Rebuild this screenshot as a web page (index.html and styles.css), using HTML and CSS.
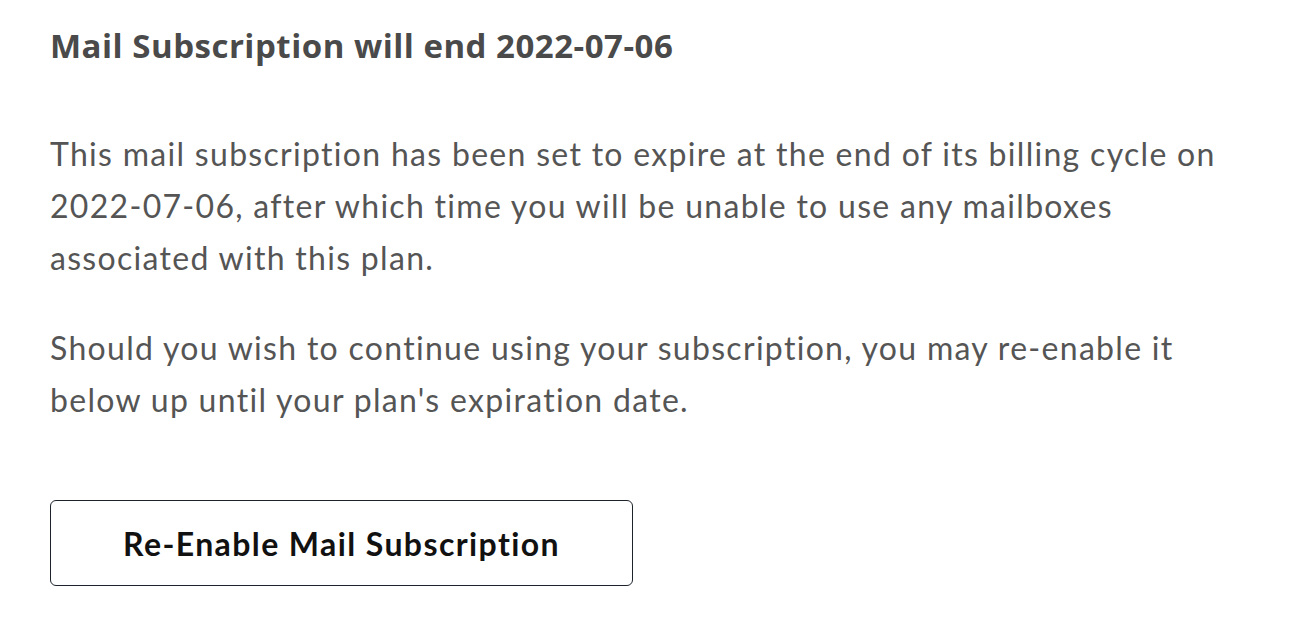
FILE: index.html
```html
<!DOCTYPE html>
<html>
<head>
<meta charset="UTF-8">
<title>Mail Subscription</title>
<link rel="stylesheet" href="styles.css">
</head>
<body>

<div class="panel">
	<h2 class="panel-title">Mail Subscription will end 2022-07-06</h2>

	<p class="panel-text">This mail subscription has been set to expire at the end of its billing cycle on 2022-07-06, after which time you will be unable to use any mailboxes associated with this plan.</p>

	<p class="panel-text">Should you wish to continue using your subscription, you may re-enable it below up until your plan's expiration date.</p>

	<button type="button" class="btn-outline">Re-Enable Mail Subscription</button>
</div>

</body>
</html>
```

FILE: styles.css
```css
body {margin: 0; background: #fff;}

.panel {padding: 24px 50px 0 50px; width: 1194px; box-sizing: content-box;}

.panel-title {margin: 0 0 60px 0; font-family: "Open Sans", sans-serif; font-weight: 700; font-size: 33px; line-height: 44px; color: #4a4a4a; letter-spacing: 0.5px;}

.panel-text {margin: 0 0 38px 0; font-family: Lato, sans-serif; font-size: 32px; line-height: 52px; color: #555; letter-spacing: 1.3px;}

.btn-outline {display: block; margin-top: 74px; width: 583px; height: 86px; background: #fff; border: 1.5px solid #1c232b; border-radius: 6px; font-family: Lato, sans-serif; font-weight: 700; font-size: 32px; letter-spacing: 1.4px; color: #111; cursor: pointer;}
```
